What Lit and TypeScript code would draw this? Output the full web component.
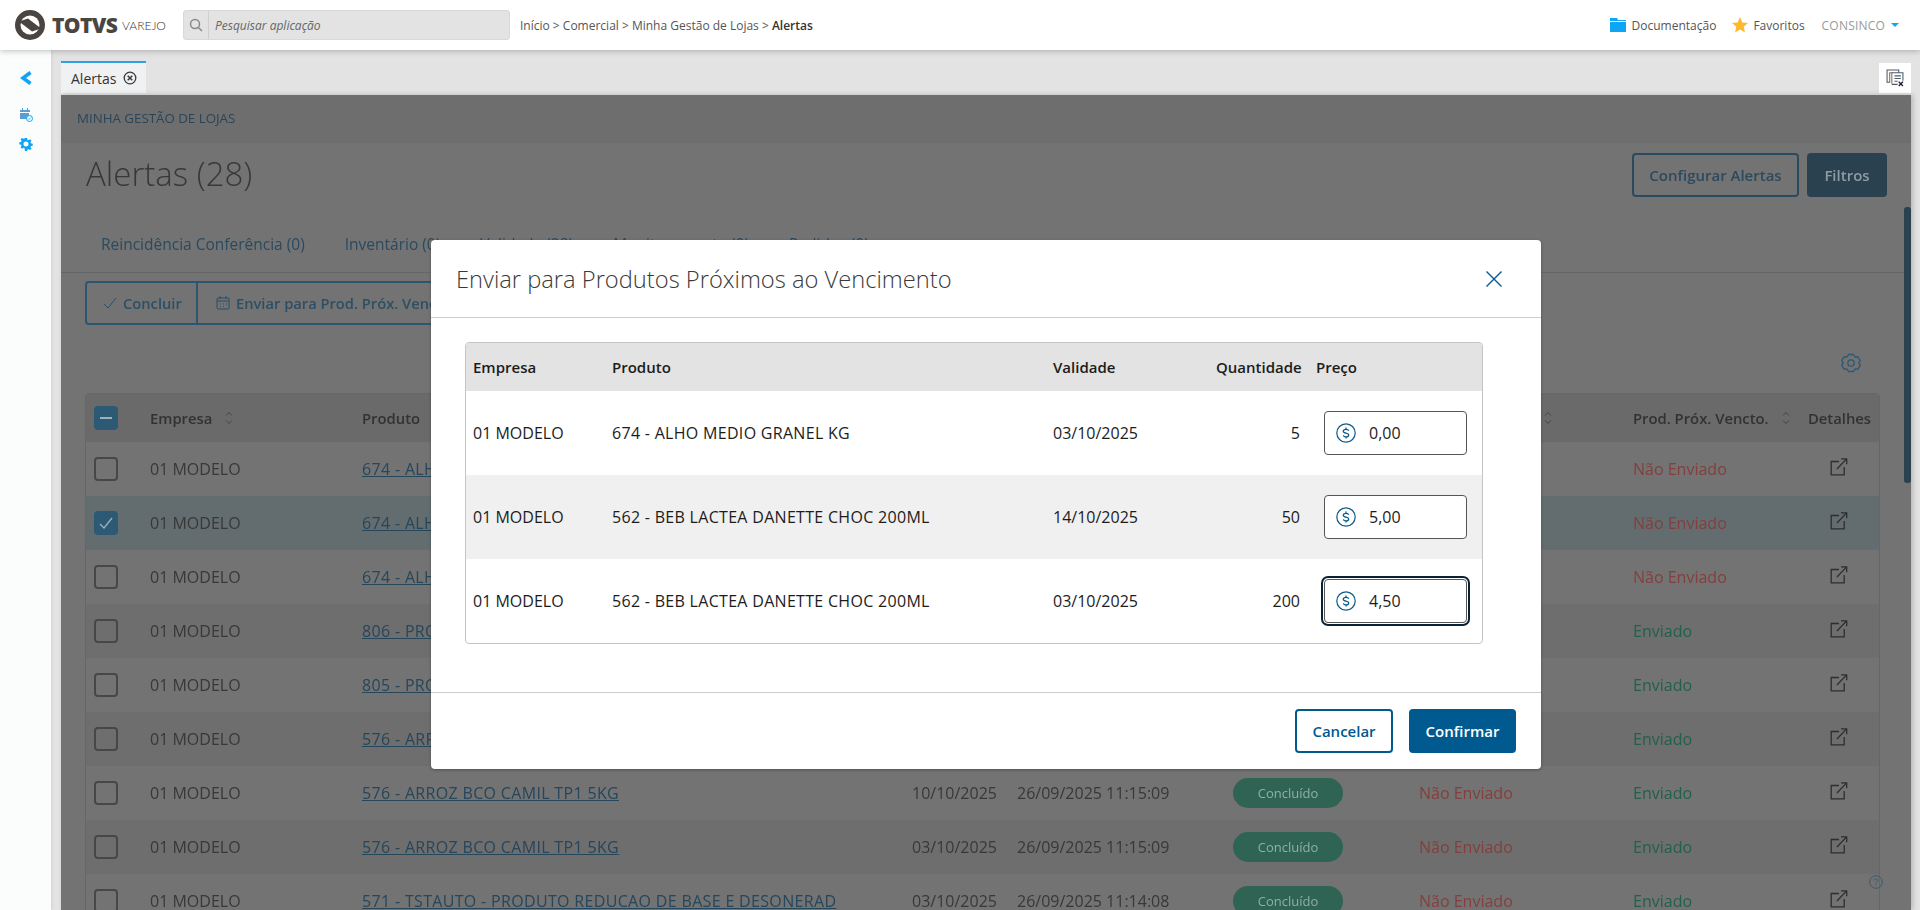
import { LitElement, html, css, svg } from "lit";
import { customElement } from "lit/decorators.js";

const ext = html`<svg class="ext" viewBox="0 0 18 18" width="18" height="18" fill="none" stroke="currentColor" stroke-width="1.3"><path d="M9 3.5H1.2v13.3h13V9"/><path d="M7 11 16.6.9M11 .9h5.7v5.4"/></svg>`;
const sort = html`<svg class="sort" viewBox="0 0 10 14" width="10" height="14" fill="none" stroke="currentColor" stroke-width="1"><path d="M2 4.5 5 1.5l3 3M2 9.5l3 3 3-3"/></svg>`;
const dollar = html`<svg class="dollar" viewBox="0 0 20 20" width="20" height="20" fill="none" stroke="#0b5a8a" stroke-width="1.2"><circle cx="10" cy="10" r="9.2"/><path stroke-width="1.3" d="M12.700 7.700c-.3-.9-1.300-1.400-2.700-1.400-1.500 0-2.700.7-2.700 1.900 0 2.700 5.400 1.200 5.400 3.700 0 1.200-1.200 1.900-2.700 1.900-1.400 0-2.400-.5-2.700-1.400M10 4.500v1.800M10 13.800v1.800"/></svg>`;
const gearSolid = svg`<path fill="#0ea5f5" fill-rule="evenodd" d="M5.400 0h2.200l.4 1.900 1.100.5 1.700-1 1.500 1.500-1 1.700.5 1.100 1.900.4v2.200l-1.900.4-.5 1.100 1 1.700-1.500 1.500-1.700-1-1.100.5-.4 1.900H5.400L5 11.100l-1.100-.5-1.700 1L.7 10.100l1-1.700-.5-1.100L-.7 6.900V4.700l1.900-.4.500-1.100-1-1.700L2.200 0l1.700 1 1.100-.5zM6.500 3.800a2.700 2.700 0 1 0 0 5.400 2.700 2.700 0 0 0 0-5.400z"/>`;

interface Row { prod: string; val: string; date: string; env: string; prox: string; sel?: boolean; }
const rows: Row[] = [
  { prod: "674 - ALHO MEDIO GRANEL KG", val: "", date: "", env: "", prox: "Não Enviado" },
  { prod: "674 - ALHO MEDIO GRANEL KG", val: "", date: "", env: "", prox: "Não Enviado", sel: true },
  { prod: "674 - ALHO MEDIO GRANEL KG", val: "", date: "", env: "", prox: "Não Enviado" },
  { prod: "806 - PRODUTO", val: "", date: "", env: "", prox: "Enviado" },
  { prod: "805 - PRODUTO", val: "", date: "", env: "", prox: "Enviado" },
  { prod: "576 - ARROZ BCO CAMIL TP1 5KG", val: "", date: "", env: "", prox: "Enviado" },
  { prod: "576 - ARROZ BCO CAMIL TP1 5KG", val: "10/10/2025", date: "26/09/2025 11:15:09", env: "Não Enviado", prox: "Enviado" },
  { prod: "576 - ARROZ BCO CAMIL TP1 5KG", val: "03/10/2025", date: "26/09/2025 11:15:09", env: "Não Enviado", prox: "Enviado" },
  { prod: "571 - TSTAUTO - PRODUTO REDUCAO DE BASE E DESONERAD", val: "03/10/2025", date: "26/09/2025 11:14:08", env: "Não Enviado", prox: "Enviado" },
];
const modalRows = [
  { prod: "674 - ALHO MEDIO GRANEL KG", val: "03/10/2025", q: "5", p: "0,00" },
  { prod: "562 - BEB LACTEA DANETTE CHOC 200ML", val: "14/10/2025", q: "50", p: "5,00" },
  { prod: "562 - BEB LACTEA DANETTE CHOC 200ML", val: "03/10/2025", q: "200", p: "4,50", focus: true },
];

@customElement("app-root")
export class AppRoot extends LitElement {
  static styles = css`
    :host { display: block; width: 1920px; height: 910px; overflow: hidden; font-family: "Open Sans", sans-serif; background: #e3e3e3; }
    * { box-sizing: border-box; }
    .top { height: 50px; background: #fff; display: flex; align-items: center; position: relative; z-index: 3; box-shadow: 0 1px 6px rgba(0,0,0,.25); padding-left: 15px; }
    .logo { display: flex; align-items: center; color: #4a4541; width: 168px; }
    .totvs { font-family: "Open Sans", sans-serif; font-weight: 800; font-size: 21px; margin-left: 7px; width: 70px; flex: none; letter-spacing: -.6px; }
    .varejo { font-family: "Lato", sans-serif; font-size: 12px; font-weight: 300; color: #333; }
    .search { width: 327px; height: 30px; background: #e3e3e3; border: 1px solid #d8d8d8; border-radius: 3px; display: flex; align-items: center; }
    .search .ic { width: 25px; height: 28px; border-right: 1px solid #cfcfcf; display: flex; align-items: center; justify-content: center; }
    .search .ph { padding-left: 6px; font-size: 12px; font-style: italic; color: #666; }
    .crumbs { margin-left: 10px; font-size: 12px; color: #555; flex: 1; }
    .crumbs b { font-weight: 600; color: #333; }
    .links { display: flex; align-items: center; font-size: 12px; color: #555; padding-right: 21px; }
    .links svg { display: block; }
    .doc { margin-left: 6px; margin-right: 16px; }
    .fav { margin-left: 5px; margin-right: 17px; }
    .user { color: #999; letter-spacing: .2px; margin-right: 6px; }
    .caret { width: 0; height: 0; border: 4px solid transparent; border-top: 4px solid #0ea5f5; border-bottom: 0; }
    .body { display: flex; height: 860px; }
    .side { width: 51px; background: #fbfcfc; display: flex; flex-direction: column; align-items: center; padding-top: 21px; box-shadow: 1px 0 3px rgba(0,0,0,.08); position: relative; z-index: 2; }
    .side svg { display: block; }
    .side .cal { margin-top: 23px; }
    .side .gr { margin-top: 15px; }
    .main { flex: 1; display: flex; flex-direction: column; min-width: 0; padding-left: 10px; position: relative; }
    .strip { height: 45px; flex: none; display: flex; align-items: flex-end; padding-right: 9px; }
    .tab { width: 85px; height: 32px; background: #f0f1f3; border-top: 2px solid #2d9fe3; display: flex; align-items: center; padding-left: 10px; font-size: 14px; color: #333; gap: 7px; margin-bottom: 2px; }
    .closer { margin-left: auto; width: 32px; height: 30px; background: #fff; display: flex; align-items: center; justify-content: center; margin-bottom: 2px; }
    .page { flex: 1; margin-right: 9px; background: #737373; position: relative; overflow: hidden; box-shadow: 2px 0 5px rgba(0,0,0,.2); color: #3c3c3c; }
    .under { filter: blur(.25px); }
    .band { height: 48px; background: #6e6e6e; padding: 0 0 2px 16px; display: flex; align-items: center; font-size: 13.300px; color: #2b4557; }
    .head { height: 77px; padding: 10px 24px 0 25px; display: flex; justify-content: space-between; }
    h1 { margin: 0; font-size: 33px; font-weight: 300; line-height: 42px; color: #383838; }
    .btns { display: flex; gap: 8px; }
    .btn { height: 44px; border-radius: 4px; font-size: 15px; font-weight: 600; display: flex; align-items: center; justify-content: center; }
    .b-out { width: 167px; border: 2px solid #2a4a5f; color: #2c4a5e; }
    .b-fill { width: 80px; background: #2a4150; color: #8f9ba3; }
    .tabs { height: 53px; border-bottom: 1px solid #666; padding: 12px 0 0 40px; display: flex; gap: 40px; font-size: 15.500px; color: #2a4a60; line-height: 24px; }
    .group { margin: 8px 0 0 24px; height: 44px; width: 520px; border: 2px solid #2d5570; border-radius: 4px; display: flex; align-items: center; font-size: 14.700px; font-weight: 600; color: #2c4f66; }
    .group > div { display: flex; align-items: center; height: 100%; gap: 6px; }
    .g1 { width: 111px; padding-left: 16px; border-right: 2px solid #2d5570; }
    .g2 { padding-left: 18px; }
    .gearrow { height: 68px; display: flex; justify-content: flex-end; padding: 27px 49px 0 0; color: #2c5874; }
    .tbl { margin-left: 24px; width: 1795px; border: 1px solid #666; border-radius: 4px 4px 0 0; }
    .tr { display: grid; grid-template-columns: 64px 212px 550px 105px 216px 186px 214px 175px 71px; align-items: center; height: 54px; font-size: 16px; color: #383838; }
    .tr.h { height: 48px; background: #6a6a6a; font-weight: 600; color: #323232; font-size: 14.800px; }
    .tr.z { background: #6e6e6e; }
    .tr.s { background: #636d70; }
    .tr > div { white-space: nowrap; display: flex; align-items: center; }
    .tr > .ck { padding-left: 8px; }
    .sort { margin-left: 12px; color: #444; }
    .cb { width: 24px; height: 24px; border: 2px solid #474747; border-radius: 4px; display: flex; align-items: center; justify-content: center; }
    .cb.on { background: #2c5a75; border-color: #2c5a75; }
    a { color: #25465b; text-decoration: underline; letter-spacing: .33px; }
    .pill { width: 110px; height: 30px; border-radius: 15px; background: #2f6353; color: #8fb0a5; font-size: 13px; align-items: center; justify-content: center; display: flex; }
    .no { color: #823f3d; }
    .yes { color: #22604d; }
    .ext { margin-left: 22px; margin-top: -4px; color: #2e2e2e; }
    .bar { position: absolute; right: 0; top: 112px; width: 7px; height: 276px; border-radius: 3px; background: #2a4150; }
    .help { position: absolute; left: 1808px; top: 780px; color: #3b5a6e; }
    .modal { position: absolute; left: 370px; top: 145px; width: 1110px; height: 529px; background: #fff; border-radius: 4px; box-shadow: 0 1px 3px rgba(0,0,0,.3); display: flex; flex-direction: column; color: #1c1c1c; font-family: "Open Sans", sans-serif; }
    .m-h { height: 78px; flex: none; border-bottom: 1px solid #ccc; display: flex; align-items: center; justify-content: space-between; padding: 0 39px 0 25px; }
    .m-h h2 { margin: 0; font-size: 23.700px; font-weight: 300; color: #3a3a3a; }
    .m-b { flex: 1; padding: 24px 58px 0 34px; }
    .m-t { border: 1px solid #c4c4c4; border-radius: 4px; overflow: hidden; }
    .mr { display: grid; grid-template-columns: 139px 441px 170px 92px 174px; align-items: center; height: 84px; font-size: 16px; }
    .mr.h { height: 48px; background: #e3e3e3; font-weight: 600; font-size: 15px; }
    .mr.z { background: #f0f0f0; }
    .mr > div:nth-child(1), .mr > div:nth-child(2) { padding-left: 7px; }
    .mr > div:nth-child(2) { letter-spacing: .3px; }
    .mr.h > div:nth-child(2) { letter-spacing: 0; }
    .mr > div:nth-child(3) { padding-left: 7px; }
    .mr > div:nth-child(4) { text-align: right; padding-right: 8px; white-space: nowrap; }
    .mr > div:nth-child(5) { padding-left: 8px; }
    .inp { margin-left: 8px; width: 143px; height: 44px; background: #fff; border: 1px solid #555; border-radius: 4px; display: flex; align-items: center; padding-left: 11px; gap: 13px; }
    .inp.f { box-shadow: 0 0 0 1px #fff, 0 0 0 3px #0b2236; }
    .m-f { height: 77px; flex: none; border-top: 1px solid #ccc; display: flex; justify-content: flex-end; align-items: center; gap: 16px; padding: 0 25px 0 0; }
    .m-btn { height: 44px; border-radius: 4px; font-size: 15px; font-weight: 600; display: flex; align-items: center; justify-content: center; }
    .can { width: 98px; border: 2px solid #005a8f; color: #005a8f; background: #fff; }
    .con { width: 107px; background: #005a8f; color: #fff; }
  `;

  render() {
    return html`
      <div class="top">
        <div class="logo">
          <svg viewBox="0 0 30 30" width="30" height="30"><circle cx="15" cy="15" r="15" fill="#4a4541"/><circle cx="15" cy="15" r="9.500" fill="#fff"/><path fill="#4a4541" d="M4 11.500 13 8.500 26 18.500 17 21.500z"/></svg>
          <span class="totvs">TOTVS</span><span class="varejo">VAREJO</span>
        </div>
        <div class="search">
          <div class="ic"><svg viewBox="0 0 14 14" width="14" height="14" fill="none" stroke="#888" stroke-width="1.500"><circle cx="6" cy="6" r="4.500"/><path d="M9.500 9.500 13 13"/></svg></div>
          <div class="ph">Pesquisar aplicação</div>
        </div>
        <div class="crumbs">Início > Comercial > Minha Gestão de Lojas > <b>Alertas</b></div>
        <div class="links">
          <svg viewBox="0 0 16 14" width="16" height="14"><path fill="#0ea5f5" d="M0 0h7l1 2h8v1H0zM0 4h16v10H0z"/></svg>
          <span class="doc">Documentação</span>
          <svg viewBox="0 0 16 16" width="16" height="16"><path fill="#fdb92e" d="M8 0l2.300 5.500 5.700.5-4.300 3.800 1.300 5.700L8 12.500 3 15.500l1.300-5.700L0 6l5.700-.5z"/></svg>
          <span class="fav">Favoritos</span>
          <span class="user">CONSINCO</span><span class="caret"></span>
        </div>
      </div>
      <div class="body">
        <div class="side">
          <svg viewBox="0 0 12 14" width="12" height="14" fill="none" stroke="#0ea5f5" stroke-width="3.600"><path d="M10.500 1.500 3 7l7.500 5.500"/></svg>
          <svg class="cal" viewBox="0 0 14 14" width="14" height="14"><path fill="#5a9fd4" d="M1 2h10v2H1zM1 5h9v6H1zM3 0h1v2H3zM8 0h1v2H8z"/><circle cx="10.500" cy="10.500" r="3" fill="#fff" stroke="#0ea5f5"/><path d="M9 10.500l1 1 2-2" stroke="#0ea5f5" fill="none" stroke-width=".8"/></svg>
          <svg class="gr" viewBox="-1 -1 15 15" width="14" height="14">${gearSolid}</svg>
        </div>
        <div class="main">
          <div class="strip">
            <div class="tab">Alertas
              <svg viewBox="0 0 14 14" width="14" height="14" fill="none" stroke="#3a3a3a" stroke-width="1.300"><circle cx="7" cy="7" r="5.800"/><path d="M4.700 4.700l4.600 4.600M9.300 4.700 4.700 9.300" stroke-width="1.500"/></svg>
            </div>
            <div class="closer">
              <svg viewBox="0 0 17 17" width="18" height="18" fill="none" stroke="#4a5a6a"><path d="M3.500 12.500H1V1h11v2.500"/><path stroke="#8a6a5a" d="M5.500 14V3.500h-2V13"/><path d="M5.500 3.500h10.500V11M5.500 14.500H11M8 6.500h6M8 9h6M8 11.500h3"/><path stroke="#223" stroke-width="1.300" d="M12 12l4 4M16 12l-4 4"/></svg>
            </div>
          </div>
          <div class="page">
            <div class="under">
              <div class="band">MINHA GESTÃO DE LOJAS</div>
              <div class="head">
                <h1>Alertas (28)</h1>
                <div class="btns"><div class="btn b-out">Configurar Alertas</div><div class="btn b-fill">Filtros</div></div>
              </div>
              <div class="tabs"><span>Reincidência Conferência (0)</span><span>Inventário (0)</span><span>Validade (28)</span><span>Monitoramento (0)</span><span>Pedidos (0)</span></div>
              <div class="group">
                <div class="g1"><svg viewBox="0 0 14 14" width="14" height="14" fill="none" stroke="#2c4f66"><path d="M1 8l4 4 8-10"/></svg>Concluir</div>
                <div class="g2"><svg viewBox="0 0 14 14" width="14" height="14" fill="none" stroke="#2c4f66"><rect x="1" y="2" width="12" height="11" rx="1"/><path d="M1 5h12M4 0v3M10 0v3M4 8h1M7 8h1M10 8h1M4 10.500h1M7 10.500h1"/></svg>Enviar para Prod. Próx. Vencto.</div>
              </div>
              <div class="gearrow">
                <svg viewBox="0 0 22 22" width="22" height="22" fill="none" stroke="currentColor" stroke-width="1.300"><circle cx="11" cy="11" r="3.200"/><path d="M8.500 2.500h5l1.500 2.500 3-.1 2.300 4.200L18.700 11l1.600 2.400L18 17.100l-3-.1-1.500 2.500h-5L7 17l-3 .1L1.700 13 3.300 11 1.700 8.600 4 4.900l3 .1z" stroke-linejoin="round"/></svg>
              </div>
              <div class="tbl">
                <div class="tr h">
                  <div class="ck"><span class="cb on"><svg viewBox="0 0 14 14" width="14" height="14"><path d="M1 7h12" stroke="#9fb0ba" stroke-width="2"/></svg></span></div>
                  <div>Empresa ${sort}</div><div>Produto</div><div></div><div></div><div></div>
                  <div>Envio para Área ${sort}</div><div>Prod. Próx. Vencto. ${sort}</div><div>Detalhes</div>
                </div>
                ${rows.map((r, i) => html`
                  <div class="tr ${r.sel ? "s" : i > 2 && i % 2 === 1 ? "z" : ""}">
                    <div class="ck"><span class="cb ${r.sel ? "on" : ""}">${r.sel ? html`<svg viewBox="0 0 14 14" width="14" height="14" fill="none" stroke="#9fb0ba" stroke-width="1.300"><path d="M1 8l4 4 8-10"/></svg>` : ""}</span></div>
                    <div>01 MODELO</div>
                    <div><a>${r.prod}</a></div>
                    <div>${r.val}</div>
                    <div>${r.date}</div>
                    <div>${r.val ? html`<span class="pill">Concluído</span>` : ""}</div>
                    <div class="no">${r.env}</div>
                    <div class="${r.prox === "Enviado" ? "yes" : "no"}">${r.prox}</div>
                    <div>${ext}</div>
                  </div>`)}
              </div>
            </div>
            <div class="bar"></div>
            <svg class="help" viewBox="0 0 14 14" width="14" height="14" fill="none" stroke="currentColor"><circle cx="7" cy="7" r="6.300"/><path d="M5 5.500C5 4.300 6 3.800 7 3.800s2 .6 2 1.700c0 1.300-2 1.500-2 3M7 9.500v1.200"/></svg>
            <div class="modal">
              <div class="m-h"><h2>Enviar para Produtos Próximos ao Vencimento</h2>
                <svg viewBox="0 0 16 16" width="16" height="16" fill="none" stroke="#005a8f" stroke-width="1.400"><path d="M.5.500l15 15M15.500.500l-15 15"/></svg>
              </div>
              <div class="m-b">
                <div class="m-t">
                  <div class="mr h"><div>Empresa</div><div>Produto</div><div>Validade</div><div>Quantidade</div><div>Preço</div></div>
                  ${modalRows.map((r, i) => html`
                    <div class="mr ${i === 1 ? "z" : ""}">
                      <div>01 MODELO</div><div>${r.prod}</div><div>${r.val}</div><div>${r.q}</div>
                      <div><div class="inp ${r.focus ? "f" : ""}">${dollar}<span>${r.p}</span></div></div>
                    </div>`)}
                </div>
              </div>
              <div class="m-f"><div class="m-btn can">Cancelar</div><div class="m-btn con">Confirmar</div></div>
            </div>
          </div>
        </div>
      </div>
    `;
  }
}
